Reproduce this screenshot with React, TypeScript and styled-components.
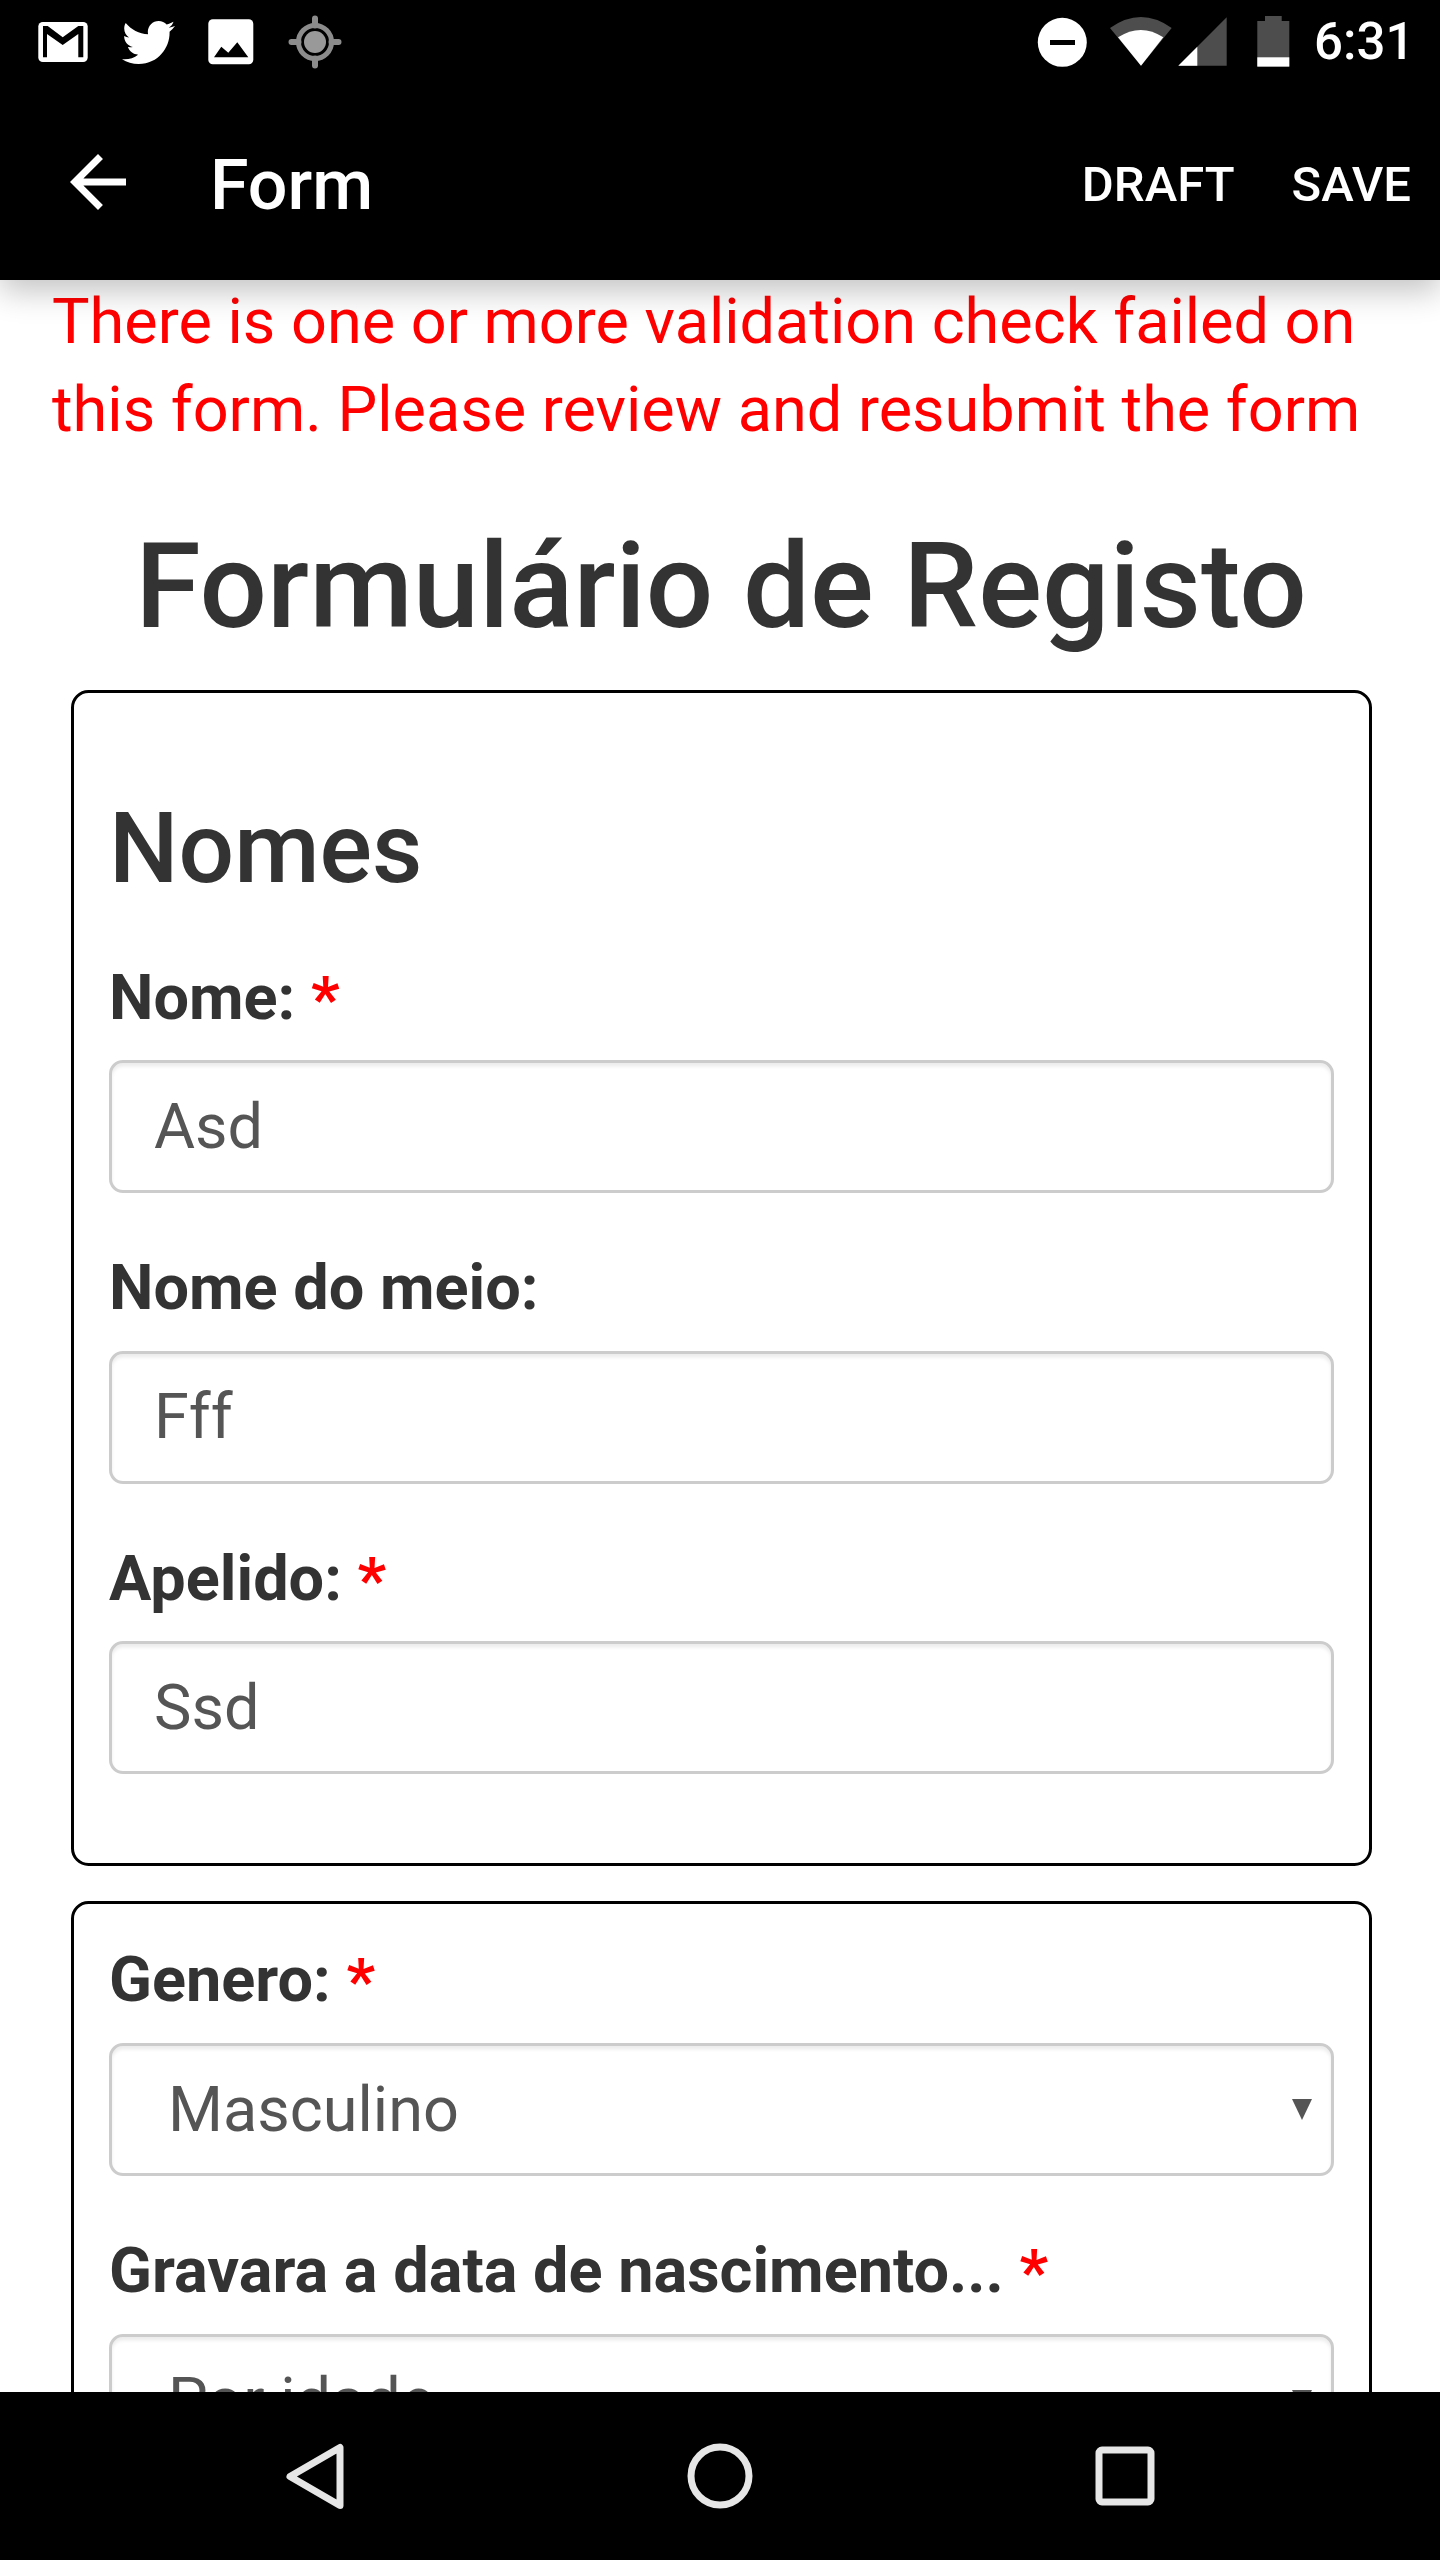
import React from "react";
import styled, { createGlobalStyle } from "styled-components";
import { FaTwitter } from "react-icons/fa";

const Global = createGlobalStyle`
  html, body { margin: 0; padding: 0; background: #fff; }
  body { font-family: Roboto, "Liberation Sans", sans-serif; color: #333; }
  * { box-sizing: border-box; }
`;

const Screen = styled.div`
  width: 1440px;
  height: 2560px;
  display: flex;
  flex-direction: column;
  overflow: hidden;
  background: #fff;
`;

const Header = styled.header`
  position: relative;
  z-index: 2;
  flex: none;
  background: #000;
  box-shadow: 0 11px 30px rgba(0, 0, 0, 0.24);
`;

const StatusBar = styled.div`
  height: 84px;
  padding: 0 32px 0 21px;
  display: flex;
  align-items: center;
`;

const StatusCell = styled.div`
  width: 84px;
  height: 84px;
  display: flex;
  align-items: center;
  justify-content: center;
  color: #fff;
`;

const TwitterCell = styled(StatusCell)`
  padding-left: 3px;
`;

const StatusRight = styled.div`
  margin-left: auto;
  display: flex;
  align-items: center;
`;

const Clock = styled.span`
  width: 94px;
  margin-left: 14px;
  color: #fff;
  font-size: 51px;
  font-weight: 500;
  line-height: 84px;
  white-space: nowrap;
`;

const Toolbar = styled.div`
  height: 196px;
  padding: 0 29px 0 56px;
  display: flex;
  align-items: center;
  color: #fff;
`;

const BackIcon = styled.svg`
  width: 84px;
  height: 84px;
  flex: none;
  fill: #fff;
`;

const Title = styled.div`
  margin: 6px 0 0 70px;
  font-size: 70px;
  font-weight: 500;
  line-height: 84px;
`;

const Actions = styled.div`
  margin: 6px 0 0 auto;
  display: flex;
  gap: 57px;
`;

const Action = styled.span`
  font-size: 49px;
  font-weight: 500;
  line-height: 56px;
`;

const Content = styled.main`
  flex: 1;
  min-height: 0;
  overflow: hidden;
`;

const ErrorText = styled.p`
  margin: -2px 0 0;
  padding: 0 52px;
  color: #f00;
  font-size: 63px;
  line-height: 87.5px;
`;

const PageTitle = styled.h1`
  margin: 68px 0 38px;
  padding-left: 2px;
  text-align: center;
  color: #333;
  font-size: 119px;
  font-weight: 500;
  line-height: 131px;
`;

const Card = styled.section`
  margin: 0 68px 35px 71px;
  padding: 40px 35px 30.2px;
  border: 3.5px solid #000;
  border-radius: 17.5px;
`;

const SectionTitle = styled.h3`
  margin: 62px 0 58px;
  color: #333;
  font-size: 98px;
  font-weight: 500;
  line-height: 108px;
`;

const Label = styled.label`
  display: block;
  height: 71.5px;
  padding-top: 1.5px;
  margin-bottom: 27.5px;
  color: #333;
  font-size: 63px;
  font-weight: 700;
  line-height: 70px;
`;

const Star = styled.span`
  color: #f00;
  vertical-align: -1.5px;
`;

const fieldStyles = `
  display: block;
  width: 100%;
  height: 133px;
  border: 3.5px solid #ccc;
  border-radius: 14px;
  background: #fff;
  color: #555;
  font-family: Roboto, "Liberation Sans", sans-serif;
  font-size: 63px;
  box-shadow: inset 0 3.5px 3.5px rgba(0, 0, 0, 0.075);
  outline: none;
`;

const TextField = styled.input`
  ${fieldStyles}
  margin-bottom: 58.6px;
  padding: 0 42px 1px;
`;

const SelectWrap = styled.div`
  position: relative;
  margin-bottom: 58.6px;
`;

const SelectField = styled.select`
  ${fieldStyles}
  appearance: none;
  padding: 0 70px 0 56px;
`;

const SelectArrow = styled.span`
  position: absolute;
  top: 56px;
  right: 22px;
  width: 0;
  height: 0;
  border-left: 10.5px solid transparent;
  border-right: 10.5px solid transparent;
  border-top: 21px solid #555;
`;

const NavBar = styled.nav`
  flex: none;
  position: relative;
  z-index: 2;
  height: 168px;
  background: #000;
  display: flex;
  align-items: center;
  justify-content: center;
  gap: 321px;
`;

const NavIcon = styled.svg`
  width: 84px;
  height: 84px;
  fill: none;
  stroke: #e6e6e6;
  stroke-width: 7;
  stroke-linejoin: round;
`;

const Field = ({ label, value, required }: { label: string; value: string; required?: boolean }) => (
  <>
    <Label>
      {label}
      {required && <Star> *</Star>}
    </Label>
    <TextField defaultValue={value} readOnly />
  </>
);

const Choice = ({ label, value }: { label: string; value: string }) => (
  <>
    <Label>
      {label}
      <Star> *</Star>
    </Label>
    <SelectWrap>
      <SelectField defaultValue={value}>
        <option>{value}</option>
      </SelectField>
      <SelectArrow />
    </SelectWrap>
  </>
);

export default function App() {
  return (
    <Screen>
      <Global />
      <Header>
        <StatusBar>
          <StatusCell>
            <svg width="84" height="84" viewBox="0 0 84 84">
              <rect x="17.3" y="22" width="49.4" height="40" rx="4.5" fill="#fff" />
              <polygon
                points="22,26 26.7,26 41.7,37.3 57.3,26 62.3,26 62.3,57.3 57.3,57.3 57.3,34 41.7,45 26,34 26,57.3 22,57.3"
                fill="#000"
              />
            </svg>
          </StatusCell>
          <TwitterCell>
            <FaTwitter size={53} />
          </TwitterCell>
          <StatusCell>
            <svg width="84" height="84" viewBox="0 0 84 84">
              <rect x="19.3" y="19.3" width="45" height="45" rx="4.5" fill="#fff" />
              <polygon points="25,57.3 32.3,46.7 39.3,52.7 48.3,42.3 59.3,57.3" fill="#000" />
            </svg>
          </StatusCell>
          <StatusCell>
            <svg width="84" height="84" viewBox="0 0 84 84">
              <circle cx="42" cy="42" r="11" fill="#999" />
              <circle cx="42" cy="42" r="16.5" fill="none" stroke="#8c8c8c" strokeWidth="5" />
              <path d="M42 18.5v7M42 58.5v7M18.5 42h7M58.5 42h7" stroke="#8c8c8c" strokeWidth="6" strokeLinecap="round" />
            </svg>
          </StatusCell>
          <StatusRight>
            <svg width="64" height="84" viewBox="0 0 64 84">
              <circle cx="32.3" cy="42.3" r="24.5" fill="#fff" />
              <rect x="20" y="40" width="25" height="5" fill="#000" />
            </svg>
            <svg width="82" height="84" viewBox="64 0 82 84">
              <path d="M111 65.7 80 28 Q111 6 141.7 28Z" fill="#4d4d4d" />
              <path d="M111 65.7 88 37.3 Q111 22.5 133.3 37.3Z" fill="#fff" />
            </svg>
            <svg width="59" height="84" viewBox="146 0 59 84">
              <polygon points="148.3,65.7 196.7,17.3 196.7,65.7" fill="#4d4d4d" />
              <polygon points="148.3,65.7 167.3,46.7 167.3,65.7" fill="#fff" />
            </svg>
            <svg width="65" height="84" viewBox="205 0 65 84">
              <path d="M235 16h16.7v5h7.6v45.6h-32V21h7.7z" fill="#4d4d4d" />
              <rect x="227.3" y="57.3" width="32" height="9.3" fill="#fff" />
            </svg>
            <Clock>6:31</Clock>
          </StatusRight>
        </StatusBar>
        <Toolbar>
          <BackIcon viewBox="0 0 24 24">
            <path d="M20 11H7.83l5.59-5.59L12 4l-8 8 8 8 1.41-1.41L7.83 13H20v-2z" />
          </BackIcon>
          <Title>Form</Title>
          <Actions>
            <Action>DRAFT</Action>
            <Action>SAVE</Action>
          </Actions>
        </Toolbar>
      </Header>
      <Content>
        <ErrorText>
          There is one or more validation check failed on this form. Please review and resubmit the form
        </ErrorText>
        <PageTitle>Formulário de Registo</PageTitle>
        <Card>
          <SectionTitle>Nomes</SectionTitle>
          <Field label="Nome:" value="Asd" required />
          <Field label="Nome do meio:" value="Fff" />
          <Field label="Apelido:" value="Ssd" required />
        </Card>
        <Card>
          <Choice label="Genero:" value="Masculino" />
          <Choice label="Gravara a data de nascimento..." value="Por idade" />
        </Card>
      </Content>
      <NavBar>
        <NavIcon viewBox="0 0 84 84">
          <path d="M67 13.5V71.5L17 42.5z" />
        </NavIcon>
        <NavIcon viewBox="0 0 84 84">
          <circle cx="42" cy="42" r="29" />
        </NavIcon>
        <NavIcon viewBox="0 0 84 84">
          <rect x="16" y="16" width="52" height="52" rx="3" />
        </NavIcon>
      </NavBar>
    </Screen>
  );
}
